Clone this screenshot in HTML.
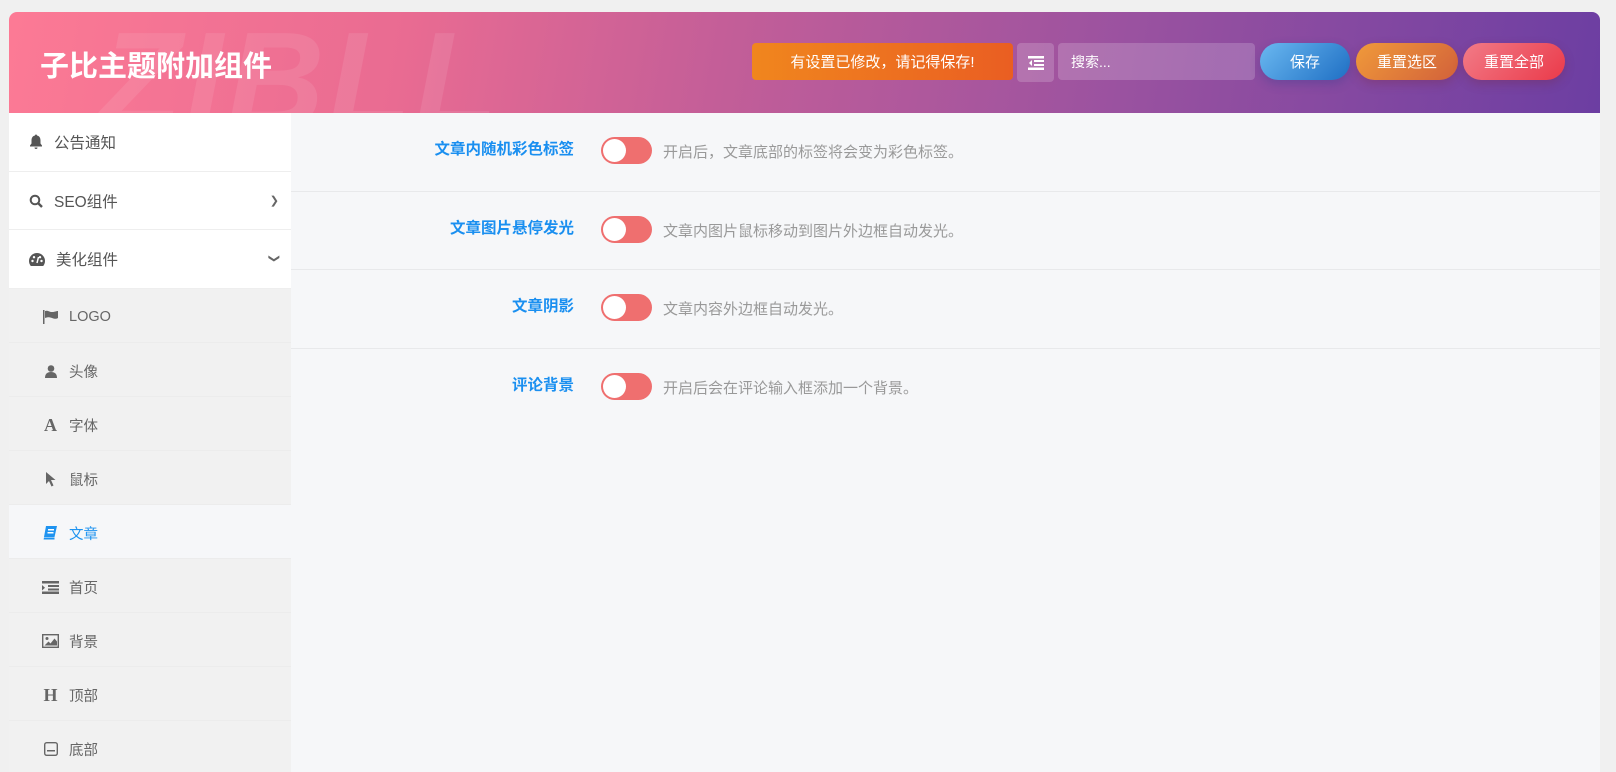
<!DOCTYPE html>
<html><head><meta charset="utf-8"><style>
*{box-sizing:border-box;margin:0;padding:0}
body{width:1616px;height:748px;overflow:hidden;background:#f0f0f0;font-family:"Liberation Sans","Noto Sans CJK SC",sans-serif;font-size:14px;position:relative}
.wrap{position:absolute;left:9px;top:12px;width:1591px;height:760px;border-radius:8px 8px 0 0;overflow:hidden;background:#f6f7f9}
.hd{position:absolute;left:0;top:0;width:1591px;height:101px;background:linear-gradient(100deg,#fc7a95 0%,#e96b92 25%,#c35e98 45%,#9a52a0 70%,#6c3ea2 100%)}
.hd .wm{position:absolute;left:90px;top:-10px;font:italic 900 135px "Liberation Sans",sans-serif;color:rgba(255,255,255,.09);letter-spacing:4px}
.hd h1{position:absolute;left:31px;top:31px;color:#fff;font-size:29px;font-weight:bold}
.btn{position:absolute;top:31px;height:37px;color:#fff;font-size:15px;display:flex;align-items:center;justify-content:center}
.side{position:absolute;left:0;top:101px;width:282px;height:662px;background:#f1f1f1}
.m{height:58.7px;background:#fff;border-bottom:1px solid #eee;display:flex;align-items:center;padding-left:20px;color:#555;font-size:15.5px;position:relative}
.m svg{margin-right:11px}
.m .ar{position:absolute;right:12px;top:22px;color:#666;font-size:11px}
.s{height:54px;display:flex;align-items:center;padding-left:33px;color:#666;font-size:14.5px;border-bottom:1px solid #ececec;padding-top:3px}
.s .ic{width:17px;margin-right:10px;display:flex;justify-content:center}
.s.act{background:#f6f7f9;color:#1e93f0}
.row{position:absolute;left:282px;width:1309px;height:78.5px;border-bottom:1px solid #e8e9eb}
.row .lb{position:absolute;right:1026px;top:24px;color:#1a8ff0;font-weight:bold;font-size:15.5px}
.row .tg{position:absolute;left:310px;top:24px;width:51px;height:27px;border-radius:14px;background:#ef6f6f}
.row .tg:after{content:"";position:absolute;left:2px;top:2px;width:23px;height:23px;border-radius:50%;background:#fff}
.row .ds{position:absolute;left:372px;top:28px;color:#999;font-size:15px}
</style></head><body>
<div class="wrap">
<div class="hd"><div class="wm">ZIBLL</div><h1>子比主题附加组件</h1>
<div class="btn" style="left:743px;width:261px;border-radius:4px;background:linear-gradient(90deg,#f0861e,#ea5e22)">有设置已修改，请记得保存!</div>
<div class="btn" style="left:1008px;width:37px;height:39px;border-radius:4px;background:rgba(255,255,255,.18)"><svg width="16" height="14" viewBox="0 0 16 14"><rect x="0" y="0" width="16" height="2.5" fill="#fff"/><rect x="6" y="4" width="10" height="2" fill="#fff"/><rect x="6" y="8" width="10" height="2" fill="#fff"/><rect x="0" y="11.5" width="16" height="2.5" fill="#fff"/><path d="M4 4L1 7l3 3z" fill="#fff"/></svg></div>
<div class="btn" style="left:1049px;width:197px;border-radius:4px;background:rgba(255,255,255,.18);justify-content:flex-start;padding-left:13px;align-items:flex-start;padding-top:9px;font-size:14px">搜索...</div>
<div class="btn" style="left:1251px;width:90px;border-radius:19px;background:linear-gradient(135deg,#6ab8f0,#1f6fc4);box-shadow:0 4px 10px rgba(40,60,140,.3)">保存</div>
<div class="btn" style="left:1347px;width:102px;border-radius:19px;background:linear-gradient(135deg,#f09a3a,#d2613a);box-shadow:0 4px 10px rgba(120,40,60,.3)">重置选区</div>
<div class="btn" style="left:1454px;width:102px;border-radius:19px;background:linear-gradient(135deg,#f27b87,#ea3a4a);box-shadow:0 4px 10px rgba(120,40,60,.3)">重置全部</div>
</div>
<div class="side">
<div class="m"><svg width="14" height="15" viewBox="0 0 14 15"><path d="M7 0.5c-.6 0-1 .4-1 1C3.5 2 2.5 4 2.5 6.5v3L1 11.5v1h12v-1l-1.5-2v-3C11.5 4 10.5 2 8 1.5c0-.6-.4-1-1-1zM5.5 13.5a1.5 1.5 0 003 0z" fill="#555"/></svg>公告通知</div>
<div class="m"><svg width="14" height="14" viewBox="0 0 14 14"><circle cx="6" cy="6" r="4.3" fill="none" stroke="#555" stroke-width="2"/><path d="M9 9l4 4" stroke="#555" stroke-width="2.4"/></svg>SEO组件<span class="ar">❯</span></div>
<div class="m"><svg width="16" height="13" viewBox="0 0 16 13"><path d="M8 0a8 8 0 00-8 8c0 2 .7 3.6 1.8 5h12.4A8 8 0 0016 8a8 8 0 00-8-8z" fill="#555"/><circle cx="3.5" cy="8" r="1.2" fill="#fff"/><circle cx="5" cy="4.2" r="1.2" fill="#fff"/><circle cx="11" cy="4.2" r="1.2" fill="#fff"/><circle cx="12.5" cy="8" r="1.2" fill="#fff"/><path d="M8 10L9.5 4" stroke="#fff" stroke-width="1.5"/></svg>美化组件<span class="ar" style="transform:rotate(90deg)">❯</span></div>
<div class="s"><span class="ic"><svg width="16" height="14" viewBox="0 0 16 14"><rect x="0" y="0" width="1.5" height="14" fill="#666"/><path d="M2 1c3-1 4 1 7 1s4-1 6-1v7c-2 1-3 1-6 0s-4-1-7 0z" fill="#666"/></svg></span>LOGO</div>
<div class="s"><span class="ic"><svg width="12" height="13" viewBox="0 0 12 13"><circle cx="6" cy="3.5" r="3.3" fill="#666"/><path d="M0 13c0-4 2-6 6-6s6 2 6 6z" fill="#666"/></svg></span>头像</div>
<div class="s"><span class="ic" style="font:bold 18px 'Liberation Serif',serif;color:#666">A</span>字体</div>
<div class="s"><span class="ic"><svg width="11" height="15" viewBox="0 0 11 15"><path d="M1 0v12l3-3 2.5 5.5 2-1L6 8h4.5z" fill="#666"/></svg></span>鼠标</div>
<div class="s act"><span class="ic"><svg width="15" height="14" viewBox="0 0 15 14"><path d="M3 0h11l-2.5 11H1zM1 11.5h10.5v2H0.6z" fill="#1e93f0"/><rect x="5" y="3" width="6" height="1.5" fill="#fff"/><rect x="4.5" y="6" width="6" height="1.5" fill="#fff"/></svg></span>文章</div>
<div class="s"><span class="ic"><svg width="17" height="13" viewBox="0 0 17 13"><rect x="0" y="0" width="17" height="2.5" fill="#666"/><rect x="6" y="4" width="11" height="2" fill="#666"/><rect x="6" y="7.5" width="11" height="2" fill="#666"/><rect x="0" y="10.5" width="17" height="2.5" fill="#666"/><path d="M0 4l3 2.7L0 9.5z" fill="#666"/></svg></span>首页</div>
<div class="s"><span class="ic"><svg width="17" height="14" viewBox="0 0 17 14"><rect x=".7" y=".7" width="15.6" height="12.6" fill="none" stroke="#666" stroke-width="1.4"/><circle cx="5" cy="4.5" r="1.5" fill="#666"/><path d="M2.5 11.5l4-4 2 2 4-5 2.5 3v4z" fill="#666"/></svg></span>背景</div>
<div class="s"><span class="ic" style="font:bold 18px 'Liberation Serif',serif;color:#666">H</span>顶部</div>
<div class="s"><span class="ic"><svg width="14" height="14" viewBox="0 0 14 14"><rect x=".7" y=".7" width="12.6" height="12.6" rx="2" fill="none" stroke="#666" stroke-width="1.4"/><rect x="3" y="8" width="8" height="1.5" fill="#666"/></svg></span>底部</div>
</div>
<div class="row" style="top:101px"><span class="lb">文章内随机彩色标签</span><span class="tg"></span><span class="ds">开启后，文章底部的标签将会变为彩色标签。</span></div>
<div class="row" style="top:179.5px"><span class="lb">文章图片悬停发光</span><span class="tg"></span><span class="ds">文章内图片鼠标移动到图片外边框自动发光。</span></div>
<div class="row" style="top:258px"><span class="lb">文章阴影</span><span class="tg"></span><span class="ds">文章内容外边框自动发光。</span></div>
<div class="row" style="top:336.5px;border:0"><span class="lb">评论背景</span><span class="tg"></span><span class="ds">开启后会在评论输入框添加一个背景。</span></div>
</div>
</body></html>
